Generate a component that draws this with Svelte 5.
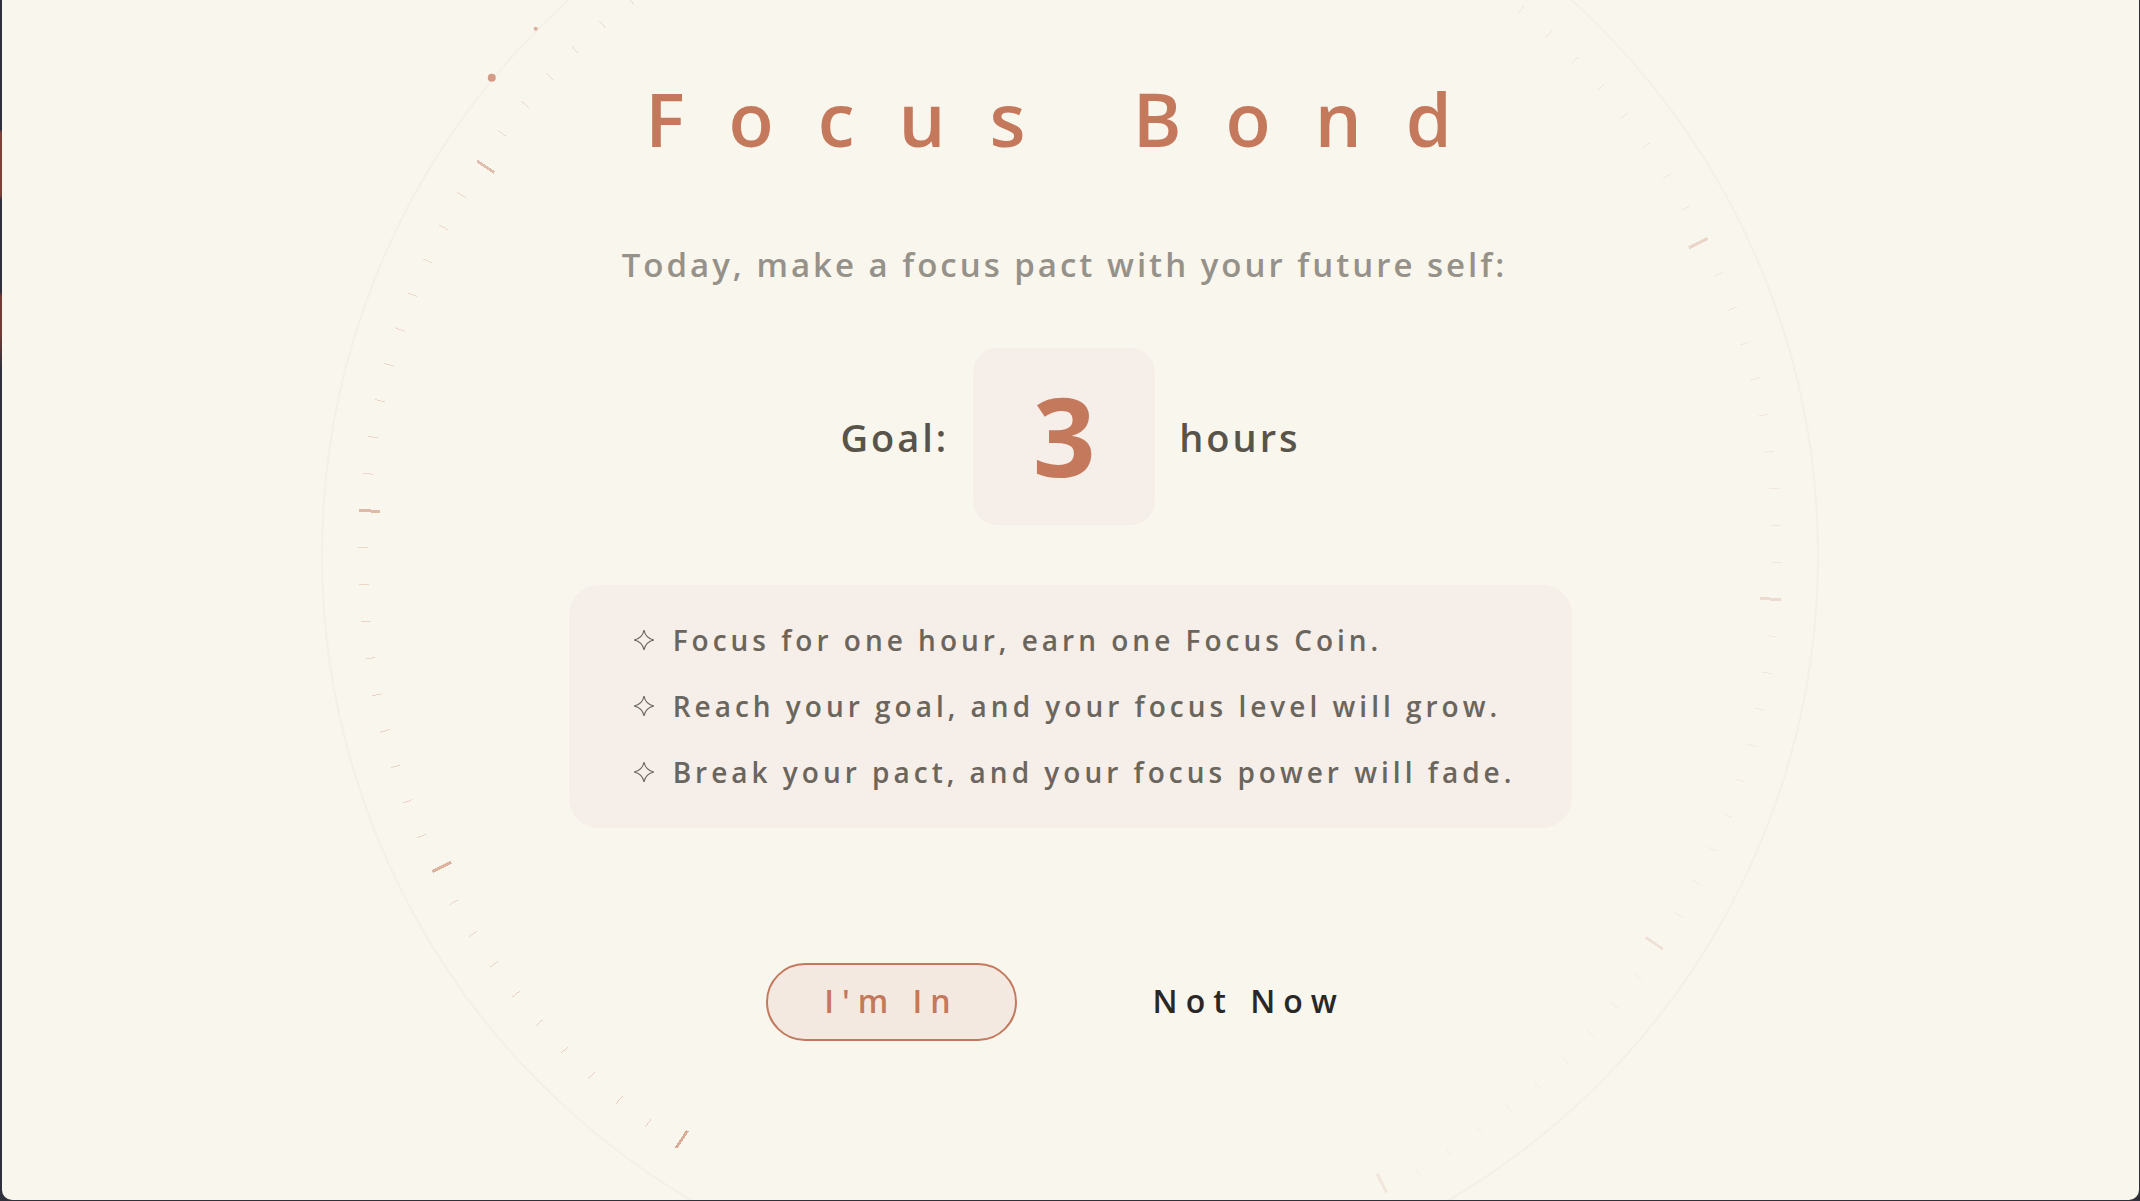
<script>
  export let title = 'Focus Bond';
  export let hours = 3;

  const rules = [
    'Focus for one hour, earn one Focus Coin.',
    'Reach your goal, and your focus level will grow.',
    'Break your pact, and your focus power will fade.'
  ];

  // 120 ticks, every tenth one is long; they fade out clockwise
  const START = 123.6;
  const ticks = Array.from({ length: 120 }, (_, i) => {
    const major = i % 10 === 0;
    const strength = 0.58 - (i / 120) * 0.56;
    return {
      angle: START + i * 3,
      major,
      opacity: major ? strength : strength * 0.52
    };
  });
</script>

<main class="screen">
  <svg class="dial" viewBox="-749 -750 1500 1500" aria-hidden="true">
    <circle class="ring" r="749" />
    {#each ticks as tick}
      <line
        class="tick"
        class:major={tick.major}
        x1={tick.major ? 692 : 703}
        x2="713"
        opacity={tick.opacity}
        transform="rotate({tick.angle})"
      />
    {/each}
    <circle class="dot" cx="-579" cy="-478" r="4" />
    <circle class="dot small" cx="-535" cy="-527" r="2" />
  </svg>

  <section class="pact">
    <h1>{title}</h1>
    <p class="lead">Today, make a focus pact with your future self:</p>

    <div class="goal">
      <span>Goal:</span>
      <strong class="hours">{hours}</strong>
      <span>hours</span>
    </div>

    <ul class="rules">
      {#each rules as rule}
        <li>
          <svg class="star" viewBox="0 0 20 20" aria-hidden="true">
            <path d="M10 1 Q11.5 8.500 19 10 Q11.500 11.500 10 19 Q8.500 11.500 1 10 Q8.500 8.500 10 1 Z" />
          </svg>
          <span>{rule}</span>
        </li>
      {/each}
    </ul>

    <div class="actions">
      <button type="button" class="accept">I'm In</button>
      <button type="button" class="decline">Not Now</button>
    </div>
  </section>
</main>

<style>
  /* what shows through around the rounded window */
  :global(body) {
    background: linear-gradient(
      #30303c 130px,
      #7a4238 132px 195px,
      #30303c 200px 292px,
      #6e3d35 296px 334px,
      #30303c 370px
    );
  }

  .screen {
    --accent: #c4795c;
    --panel: #f6eee9;
    position: relative;
    box-sizing: border-box;
    min-height: calc(100vh - 1px);
    margin: 0 1px 1px 2px;
    padding: 71px 24px 0;
    overflow: hidden;
    border-radius: 0 0 10px 10px;
    background: #f9f6ee;
    box-shadow: 1px 1px 0 #30303c;
    color: #595449;
    font-family: 'Open Sans', 'Noto Sans', sans-serif;
    font-weight: 600;
  }

  .dial {
    position: absolute;
    top: 555px;
    left: 50%;
    width: 70vw;
    transform: translate(-50%, -50%);
    overflow: visible;
  }

  .ring {
    fill: none;
    stroke: #f3f0e9;
    stroke-width: 2;
  }

  .tick {
    stroke: var(--accent);
    stroke-width: 1;
    shape-rendering: crispEdges;
  }

  .tick.major {
    stroke-width: 3;
  }

  .dot {
    fill: #d49c87;
  }

  .dot.small {
    opacity: 0.8;
  }

  .pact {
    position: relative;
    display: flex;
    flex-direction: column;
    align-items: center;
  }

  h1 {
    margin: 0;
    color: var(--accent);
    font-size: 74px;
    font-weight: 600;
    line-height: 96px;
    letter-spacing: 44px;
  }

  .lead {
    margin: 74px 0 0;
    padding-right: 12px;
    color: #96928a;
    font-size: 33px;
    line-height: 48px;
    letter-spacing: 3px;
  }

  .goal {
    display: flex;
    align-items: center;
    gap: 24px;
    margin-top: 59px;
    font-size: 38px;
    letter-spacing: 3px;
  }

  .hours {
    display: flex;
    align-items: center;
    justify-content: center;
    box-sizing: border-box;
    min-width: 182px;
    height: 177px;
    padding-bottom: 5px;
    border-radius: 24px;
    background: var(--panel);
    color: var(--accent);
    font-size: 110px;
    font-weight: 700;
    letter-spacing: 0;
  }

  .rules {
    margin: 60px 0 0;
    padding: 22px 57px 23px 64px;
    border-radius: 30px;
    background: var(--panel);
    color: #6b665d;
    font-size: 28px;
    line-height: 66px;
    letter-spacing: 4px;
    list-style: none;
  }

  .rules li {
    display: flex;
    align-items: center;
    gap: 18px;
  }

  .star {
    width: 22px;
    height: 22px;
    fill: none;
    stroke: #6b665d;
    stroke-width: 1;
  }

  .actions {
    display: flex;
    align-items: center;
    gap: 106px;
    margin-top: 135px;
  }

  button {
    box-sizing: border-box;
    height: 78px;
    padding: 0 28px 4px;
    border: 2px solid transparent;
    border-radius: 39px;
    background: none;
    color: #2a2826;
    font-family: inherit;
    font-size: 32px;
    font-weight: 600;
    letter-spacing: 8px;
    cursor: pointer;
  }

  .accept {
    padding: 0 56px 4px;
    border-color: var(--accent);
    background: #f4e9e1;
    color: var(--accent);
  }
</style>
